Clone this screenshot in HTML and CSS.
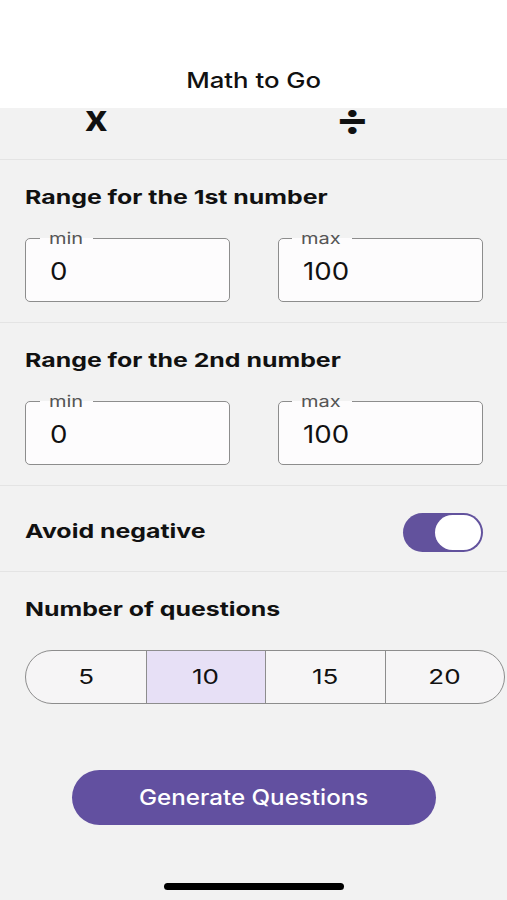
FILE: index.html
```html
<!DOCTYPE html>
<html lang="en">
<head>
    <meta charset="UTF-8">
    <meta name="viewport" content="width=device-width, initial-scale=1.0">
    <title>Math to Go</title>
    <link rel="stylesheet" href="styles.css">
</head>
<body>
    <header class="top-bar">
        <h1 class="title"><span class="wide wide-center">Math to Go</span></h1>
    </header>

    <main class="content">
        <div class="ops">
            <span class="op op-times">x</span>
            <span class="op op-div">÷</span>
        </div>

        <section class="section">
            <h2 class="section-title"><span class="wide bold-wide">Range for the 1st number</span></h2>
            <div class="range">
                <div class="field">
                    <span class="field-label label-min"><span class="wide">min</span></span>
                    <span class="field-value wide">0</span>
                </div>
                <div class="field">
                    <span class="field-label label-max"><span class="wide">max</span></span>
                    <span class="field-value wide">100</span>
                </div>
            </div>
        </section>

        <section class="section">
            <h2 class="section-title"><span class="wide bold-wide">Range for the 2nd number</span></h2>
            <div class="range">
                <div class="field">
                    <span class="field-label label-min"><span class="wide">min</span></span>
                    <span class="field-value wide">0</span>
                </div>
                <div class="field">
                    <span class="field-label label-max"><span class="wide">max</span></span>
                    <span class="field-value wide">100</span>
                </div>
            </div>
        </section>

        <section class="section toggle-row">
            <h2 class="section-title"><span class="wide bold-wide">Avoid negative</span></h2>
            <div class="switch on"><span class="knob"></span></div>
        </section>

        <section class="section last">
            <h2 class="section-title"><span class="wide bold-wide">Number of questions</span></h2>
            <div class="segments">
                <div class="segment"><span class="wide wide-center seg-text">5</span></div>
                <div class="segment active"><span class="wide wide-center seg-text">10</span></div>
                <div class="segment"><span class="wide wide-center seg-text">15</span></div>
                <div class="segment"><span class="wide wide-center seg-text">20</span></div>
            </div>
        </section>

        <div class="actions">
            <button class="btn-generate"><span class="wide wide-center">Generate Questions</span></button>
        </div>

        <div class="home-indicator"></div>
    </main>
</body>
</html>
```

FILE: styles.css
```css
* {
    box-sizing: border-box;
}

body {
    margin: 0;
    font-family: Inter, "Noto Sans", sans-serif;
    color: #111;
    background-color: #f2f2f2;
    width: 507px;
    height: 900px;
    overflow: hidden;
}

/* the screenshot is stretched sideways, so text is widened to match */
.wide {
    display: inline-block;
    transform: scaleX(1.2);
    transform-origin: left center;
}

.wide-center {
    transform-origin: center center;
}

.bold-wide {
    transform: scaleX(1.31);
}

.top-bar {
    height: 108px;
    background-color: #fff;
    display: flex;
    align-items: flex-end;
    justify-content: center;
    padding-bottom: 15px;
}

.title {
    margin: 0;
    font-size: 22px;
    font-weight: 500;
    line-height: 26px;
}

.title .wide {
    transform: scaleX(1.17);
}

.content {
    display: flex;
    flex-direction: column;
}

.ops {
    height: 52px;
    display: grid;
    grid-template-columns: 1fr 1fr;
    border-bottom: 1px solid #e4e4e4;
}

.op {
    justify-self: start;
    font-size: 36px;
    font-weight: 700;
    line-height: 20px;
    height: 20px;
}

.op-times {
    padding-left: 86px;
    transform: scaleX(1.1);
    transform-origin: 98px center;
}

.op-div {
    padding-left: 84px;
    font-size: 42px;
    font-weight: 700;
    line-height: 22px;
    transform: scaleX(1.2);
    transform-origin: 98px center;
}

.section {
    padding: 26px 25px 20px;
    border-bottom: 1px solid #e4e4e4;
}

.section-title {
    margin: 0;
    font-size: 19px;
    font-weight: 700;
    line-height: 24px;
}

.range {
    display: grid;
    grid-template-columns: 205px 205px;
    column-gap: 48px;
    margin-top: 28px;
}

.field {
    position: relative;
    height: 64px;
    border: 1.5px solid #8d8d8d;
    border-radius: 5px;
    background-color: #fdfcfd;
    display: flex;
    align-items: center;
    padding-left: 24px;
    padding-top: 2px;
}

.field-label {
    position: absolute;
    top: -11px;
    padding-left: 9px;
    font-size: 16px;
    color: #555;
    background: linear-gradient(#f2f2f2 50%, #fdfcfd 50%);
    line-height: 20px;
}

.label-min {
    left: 14px;
    width: 53px;
}

.label-max {
    left: 13px;
    width: 60px;
}

.field-label .wide {
    transform: scaleX(1.25);
}

.field-value {
    font-size: 24px;
    transform: scaleX(1.15);
}

.toggle-row {
    display: flex;
    align-items: center;
    justify-content: space-between;
    height: 86px;
    padding: 7px 24px 0 25px;
}

.switch {
    width: 80px;
    height: 39px;
    border-radius: 20px;
    background-color: #62529d;
    display: flex;
    align-items: center;
    padding: 2px;
}

.switch.on {
    justify-content: flex-end;
}

.knob {
    width: 46px;
    height: 35px;
    border-radius: 18px;
    background-color: #fff;
}

.section.last {
    border-bottom: none;
    padding: 26px 2px 0 25px;
}

.segments {
    display: grid;
    grid-template-columns: repeat(4, 1fr);
    height: 54px;
    margin-top: 28px;
    border: 1.5px solid #8d8d8d;
    border-radius: 27px;
    overflow: hidden;
    background-color: #f6f5f6;
}

.segment {
    display: flex;
    align-items: center;
    justify-content: center;
    font-size: 20px;
    border-left: 1.5px solid #8d8d8d;
}

.segment:first-child {
    border-left: none;
}

.segment.active {
    background-color: #e7e0f6;
}

.seg-text {
    transform: scaleX(1.3);
}

.actions {
    display: flex;
    justify-content: center;
    margin-top: 66px;
}

.btn-generate {
    width: 364px;
    height: 55px;
    border: none;
    border-radius: 28px;
    background-color: #6250a0;
    color: #fff;
    font-family: Inter, "Noto Sans", sans-serif;
    font-size: 21px;
    font-weight: 500;
    cursor: pointer;
}

.btn-generate .wide {
    transform: scaleX(1.15);
}

.home-indicator {
    width: 180px;
    height: 7px;
    border-radius: 4px;
    background-color: #000;
    margin: 58px auto 0;
}
```
